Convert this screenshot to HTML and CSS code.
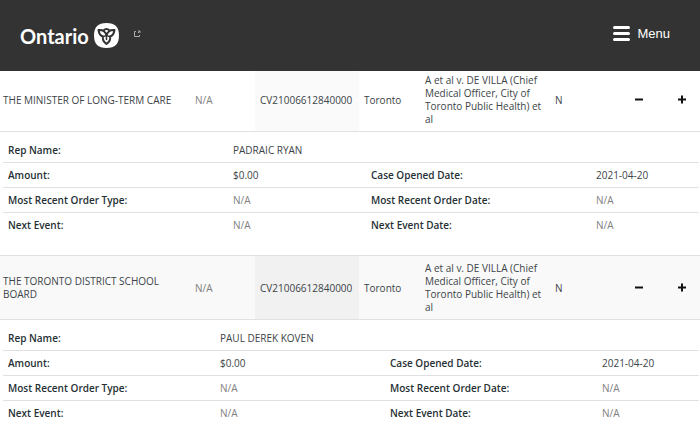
FILE: index.html
```html
<!DOCTYPE html>
<html lang="en">
<head>
  <meta charset="UTF-8">
  <meta name="viewport" content="width=device-width, initial-scale=1.0">
  <title>Ontario - Case Search</title>
  <link rel="stylesheet" href="styles.css">
</head>
<body>
  <header class="site-header">
    <a class="logo" href="#">
      <span class="logo-text">Ontario</span>
      <svg class="logo-mark" viewBox="0 0 50 50" aria-hidden="true">
        <path fill="#fff" d="M25 0C42 0 50 8 50 25S42 50 25 50 0 42 0 25 8 0 25 0z"/>
        <g fill="none" stroke="#333" stroke-width="4" stroke-linejoin="round" stroke-linecap="round">
          <path d="M25 24C22 16 17 13 9 14C10 21 13 26 18 27C16 33 20 38 25 42C30 38 34 33 32 27C37 26 40 21 41 14C33 13 28 16 25 24"/>
          <path d="M19 15C23 11 27 11 31 15"/>
          <path d="M18 27C21 27 23 26 25 24C27 26 29 27 32 27" stroke-width="3"/>
          <path d="M25 25V33" stroke-width="3"/>
        </g>
      </svg>
      <svg class="external-icon" viewBox="0 0 8 8" aria-hidden="true">
        <path d="M3 1.5H1.5V6.5H6.5V5M5 1H7V3M7 1L5 3" fill="none" stroke="#aaa"/>
      </svg>
    </a>
    <button type="button" class="menu-btn">
      <svg class="menu-icon" viewBox="0 0 17 15" aria-hidden="true">
        <path d="M1.5 1.5H15.5M1.5 7.5H15.5M1.5 13.5H15.5" stroke="#fff" stroke-width="3" stroke-linecap="round"/>
      </svg>
      Menu
    </button>
  </header>

  <main>
    <table class="results">
      <colgroup>
        <col class="col-party">
        <col class="col-alias">
        <col class="col-case">
        <col class="col-court">
        <col class="col-title">
        <col class="col-flag">
        <col class="col-less">
        <col class="col-more">
      </colgroup>
      <tbody>
        <tr class="result-row">
          <td>THE MINISTER OF LONG-TERM CARE</td>
          <td class="empty">N/A</td>
          <td class="sorted">CV21006612840000</td>
          <td>Toronto</td>
          <td>A et al v. DE VILLA (Chief Medical Officer, City of Toronto Public Health) et al</td>
          <td>N</td>
          <td class="toggle"><button type="button" class="icon-btn" aria-label="Hide details"><svg viewBox="0 0 10 10"><path d="M1 5.5H9"/></svg></button></td>
          <td class="toggle"><button type="button" class="icon-btn" aria-label="Show more"><svg viewBox="0 0 10 10"><path d="M1 5.5H9M5 1.5V9.5"/></svg></button></td>
        </tr>
        <tr class="detail-row">
          <td colspan="8">
            <table class="details">
              <colgroup><col class="col-label"><col class="col-value"><col class="col-label-end"><col class="col-value-end"></colgroup>
              <tbody>
                <tr><th scope="row">Rep Name:</th><td colspan="3">PADRAIC RYAN</td></tr>
                <tr><th scope="row">Amount:</th><td>$0.00</td><th scope="row">Case Opened Date:</th><td>2021-04-20</td></tr>
                <tr><th scope="row">Most Recent Order Type:</th><td class="empty">N/A</td><th scope="row">Most Recent Order Date:</th><td class="empty">N/A</td></tr>
                <tr><th scope="row">Next Event:</th><td class="empty">N/A</td><th scope="row">Next Event Date:</th><td class="empty">N/A</td></tr>
              </tbody>
            </table>
          </td>
        </tr>
        <tr class="result-row odd">
          <td>THE TORONTO DISTRICT SCHOOL BOARD</td>
          <td class="empty">N/A</td>
          <td class="sorted">CV21006612840000</td>
          <td>Toronto</td>
          <td>A et al v. DE VILLA (Chief Medical Officer, City of Toronto Public Health) et al</td>
          <td>N</td>
          <td class="toggle"><button type="button" class="icon-btn" aria-label="Hide details"><svg viewBox="0 0 10 10"><path d="M1 5.5H9"/></svg></button></td>
          <td class="toggle"><button type="button" class="icon-btn" aria-label="Show more"><svg viewBox="0 0 10 10"><path d="M1 5.5H9M5 1.5V9.5"/></svg></button></td>
        </tr>
        <tr class="detail-row">
          <td colspan="8">
            <table class="details details-wide">
              <colgroup><col class="col-label"><col class="col-value"><col class="col-label-end"><col class="col-value-end"></colgroup>
              <tbody>
                <tr><th scope="row">Rep Name:</th><td colspan="3">PAUL DEREK KOVEN</td></tr>
                <tr><th scope="row">Amount:</th><td>$0.00</td><th scope="row">Case Opened Date:</th><td>2021-04-20</td></tr>
                <tr><th scope="row">Most Recent Order Type:</th><td class="empty">N/A</td><th scope="row">Most Recent Order Date:</th><td class="empty">N/A</td></tr>
                <tr><th scope="row">Next Event:</th><td class="empty">N/A</td><th scope="row">Next Event Date:</th><td class="empty">N/A</td></tr>
              </tbody>
            </table>
          </td>
        </tr>
      </tbody>
    </table>
  </main>
</body>
</html>
```
FILE: styles.css
```css
/* Base styles */
* {
  box-sizing: border-box;
}

body {
  margin: 0;
  background-color: #fff;
  color: #3c4448;
  font-family: "Open Sans", "Noto Sans", sans-serif;
  font-size: 10px;
  line-height: 13px;
}

/* Header stays on top while the results scroll under it */
.site-header {
  position: sticky;
  top: 0;
  z-index: 10;
  display: flex;
  justify-content: space-between;
  align-items: center;
  height: 71px;
  padding: 0 30px 4px 20px;
  background-color: #333;
}

.logo {
  display: flex;
  align-items: center;
  color: #fff;
  text-decoration: none;
}

.logo-text {
  padding-top: 4px;
  font-family: Lato, sans-serif;
  font-size: 20px;
  font-weight: 700;
  line-height: 24px;
}

.logo-mark {
  width: 25px;
  height: 25px;
  margin: 4px 0 0 5px;
}

.external-icon {
  width: 8px;
  height: 8px;
  margin-left: 14px;
}

.menu-btn {
  display: flex;
  align-items: center;
  gap: 7px;
  padding: 0;
  border: none;
  background: none;
  color: #fff;
  font-family: "Liberation Sans", Arial, sans-serif;
  font-size: 13px;
  cursor: pointer;
}

.menu-icon {
  width: 17px;
  height: 15px;
}

/* Results table */
main {
  margin-top: -4px;
}

.results,
.details {
  border-collapse: separate;
  border-spacing: 0;
  table-layout: fixed;
  width: 100%;
}

.results td,
.details th {
  padding: 5px;
  border-top: 1px solid #e1e1e1;
  text-align: left;
  vertical-align: middle;
}

.result-row > td {
  padding-top: 6px;
}

.result-row > td:first-child {
  padding-left: 3px;
}

.col-alias { width: 65px; }
.col-case { width: 104px; }
.col-court { width: 61px; }
.col-title { width: 130px; }
.col-flag { width: 64px; }
.col-less { width: 50px; }
.col-more { width: 36px; }

.sorted {
  background-color: #fafafa;
}

.odd {
  background-color: #f9f9f9;
}

.odd .sorted {
  background-color: #f1f1f1;
}

.results .empty {
  color: #808080;
}

.results .toggle {
  text-align: center;
}

.icon-btn {
  padding: 0;
  border: none;
  background: none;
  cursor: pointer;
}

.icon-btn svg {
  display: block;
  width: 10px;
  height: 10px;
  stroke: #111;
  stroke-width: 2;
}

/* Expanded case details */
.detail-row > td {
  padding: 5px 1px 18px 3px;
}

.details th {
  color: #263034;
  font-weight: 600;
}

.details th,
.details td {
  height: 25px;
}

.details tr:first-child > * {
  border-top-color: transparent;
}

.details .col-label,
.details .col-label-end { width: 225px; }
.details .col-value { width: 138px; }

.details-wide .col-label,
.details-wide .col-label-end { width: 212px; }
.details-wide .col-value { width: 170px; }
```
